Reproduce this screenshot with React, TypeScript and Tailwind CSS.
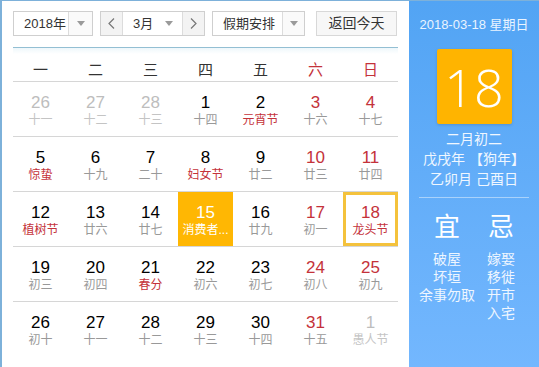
import React from "react";

type Day = {
  n: number;
  sub: string;
  other?: boolean;
  red?: boolean;
  fest?: boolean;
  today?: boolean;
  picked?: boolean;
};

const weeks: Day[][] = [
  [
    { n: 26, sub: "十一", other: true },
    { n: 27, sub: "十二", other: true },
    { n: 28, sub: "十三", other: true },
    { n: 1, sub: "十四" },
    { n: 2, sub: "元宵节", fest: true },
    { n: 3, sub: "十六", red: true },
    { n: 4, sub: "十七", red: true },
  ],
  [
    { n: 5, sub: "惊蛰", fest: true },
    { n: 6, sub: "十九" },
    { n: 7, sub: "二十" },
    { n: 8, sub: "妇女节", fest: true },
    { n: 9, sub: "廿二" },
    { n: 10, sub: "廿三", red: true },
    { n: 11, sub: "廿四", red: true },
  ],
  [
    { n: 12, sub: "植树节", fest: true },
    { n: 13, sub: "廿六" },
    { n: 14, sub: "廿七" },
    { n: 15, sub: "消费者...", picked: true },
    { n: 16, sub: "廿九" },
    { n: 17, sub: "初一", red: true },
    { n: 18, sub: "龙头节", red: true, fest: true, today: true },
  ],
  [
    { n: 19, sub: "初三" },
    { n: 20, sub: "初四" },
    { n: 21, sub: "春分", fest: true },
    { n: 22, sub: "初六" },
    { n: 23, sub: "初七" },
    { n: 24, sub: "初八", red: true },
    { n: 25, sub: "初九", red: true },
  ],
  [
    { n: 26, sub: "初十" },
    { n: 27, sub: "十一" },
    { n: 28, sub: "十二" },
    { n: 29, sub: "十三" },
    { n: 30, sub: "十四" },
    { n: 31, sub: "十五", red: true },
    { n: 1, sub: "愚人节", other: true },
  ],
];

const Caret = () => (
  <svg width="8" height="5" viewBox="0 0 8 5">
    <path d="M0 0h8L4 5z" fill="#9a9a9a" />
  </svg>
);

const Chevron = ({ left }: { left?: boolean }) => (
  <svg width="7" height="11" viewBox="0 0 7 11">
    <path
      d={left ? "M6 0.5L1 5.5l5 5" : "M1 0.5l5 5-5 5"}
      fill="none"
      stroke="#777"
      strokeWidth="1.2"
    />
  </svg>
);

const Cell = ({ d }: { d: Day }) => {
  let numCls = "text-black";
  let subCls = "text-[#999]";
  if (d.other) {
    numCls = "text-[#bdbdbd]";
    subCls = "text-[#c4c4c4]";
  } else if (d.red) {
    numCls = "text-[#c4323a]";
  }
  if (d.fest && !d.other) subCls = "text-[#c4323a]";
  if (d.picked) {
    numCls = "text-white";
    subCls = "text-white";
  }
  return (
    <div
      className={
        "flex flex-col items-center " +
        (d.picked ? "bg-[#ffb703] " : "") +
        (d.today ? "border-[3px] border-[#f4c23c] pt-[9px]" : "pt-[12px]")
      }
    >
      <span className={"text-[17px] leading-[18px] " + numCls}>{d.n}</span>
      <span className={"text-[12px] leading-[16px] whitespace-nowrap " + subCls}>
        {d.sub}
      </span>
    </div>
  );
};

export default function App() {
  return (
    <div
      className="w-[539px] h-[367px] overflow-hidden flex border-l-2 border-t border-[#7db1da]"
      style={{ fontFamily: '"Liberation Sans", "Noto Sans CJK SC", sans-serif' }}
    >
      {/* left calendar */}
      <div className="w-[407px] shrink-0 bg-white pl-[11px] pr-[11px] pt-[10px]">
        <div className="flex items-center h-[25px] text-[13px] text-[#333]">
          <div className="flex w-[80px] h-full border border-[#cfcfcf] bg-white">
            <span className="flex-1 pl-[10px] leading-[23px]">2018年</span>
            <span className="w-[24px] flex items-center justify-center border-l border-[#dcdcdc] bg-[#fafafa]">
              <Caret />
            </span>
          </div>
          <div className="flex w-[105px] h-full ml-[7px] border border-[#cfcfcf] bg-white">
            <span className="w-[22px] flex items-center justify-center bg-[#f3f3f3] border-r border-[#dcdcdc]">
              <Chevron left />
            </span>
            <span className="flex-1 flex items-center pl-[10px]">
              <span className="flex-1 leading-[23px]">3月</span>
              <span className="pr-[9px] flex items-center">
                <Caret />
              </span>
            </span>
            <span className="w-[22px] flex items-center justify-center bg-[#f3f3f3] border-l border-[#dcdcdc]">
              <Chevron />
            </span>
          </div>
          <div className="flex w-[93px] h-full ml-[7px] border border-[#cfcfcf] bg-white">
            <span className="flex-1 pl-[10px] leading-[23px]">假期安排</span>
            <span className="w-[22px] flex items-center justify-center border-l border-[#dcdcdc] bg-[#fafafa]">
              <Caret />
            </span>
          </div>
          <div className="w-[81px] h-full ml-[11px] border border-[#d8d8d8] bg-[#f7f7f7] flex items-center justify-center text-[14px]">
            返回今天
          </div>
        </div>

        <div className="mt-[11px] border-t border-[#93bfd3]" />
        <div className="h-[6px] bg-gradient-to-b from-[#eef7fb] to-white -mb-[6px]" />

        <div className="grid grid-cols-7 h-[34px] border-b border-[#d6d6d6] pt-[12px] text-[15px] leading-[20px] text-center text-[#333]">
          {["一", "二", "三", "四", "五", "六", "日"].map((w, i) => (
            <span key={w} className={i > 4 ? "text-[#c4323a]" : ""}>
              {w}
            </span>
          ))}
        </div>

        {weeks.map((wk, i) => (
          <div
            key={i}
            className={
              "grid grid-cols-7 h-[55px] " +
              (i < weeks.length - 1 ? "border-b border-[#d6d6d6]" : "")
            }
          >
            {wk.map((d, j) => (
              <Cell key={j} d={d} />
            ))}
          </div>
        ))}
      </div>

      {/* right info panel */}
      <div className="flex-1 bg-gradient-to-b from-[#52a4f4] to-[#73b7fe] text-white flex flex-col items-center pt-[14px]">
        <div className="text-[13px] leading-[20px] text-[#eaf4ff]">2018-03-18 星期日</div>
        <div className="mt-[14px] w-[75px] h-[75px] bg-[#ffb400] rounded-[2px] shadow-[0_1px_3px_rgba(0,0,0,0.15)] flex items-center justify-center">
          <span
            className="text-[52px] font-light leading-none"
            style={{ fontFamily: '"Open Sans", "Liberation Sans", sans-serif' }}
          >
            18
          </span>
        </div>
        <div className="mt-[5px] text-[14px] leading-[20px] text-center text-[#f0f7ff]">
          <div>二月初二</div>
          <div>戊戌年 【狗年】</div>
          <div>乙卯月 己酉日</div>
        </div>
        <div className="mt-[8px] w-[110px] border-t border-[#a9d2fb]" />
        <div className="mt-[14px] w-[108px] grid grid-cols-2 text-center">
          <div className="flex flex-col items-center">
            <span className="text-[26px] leading-[30px]">宜</span>
            <div className="mt-[8px] text-[14px] leading-[18px] text-[#eef6ff]">
              <div>破屋</div>
              <div>坏垣</div>
              <div className="whitespace-nowrap">余事勿取</div>
            </div>
          </div>
          <div className="flex flex-col items-center">
            <span className="text-[26px] leading-[30px]">忌</span>
            <div className="mt-[8px] text-[14px] leading-[18px] text-[#eef6ff]">
              <div>嫁娶</div>
              <div>移徙</div>
              <div>开市</div>
              <div>入宅</div>
            </div>
          </div>
        </div>
      </div>
    </div>
  );
}
